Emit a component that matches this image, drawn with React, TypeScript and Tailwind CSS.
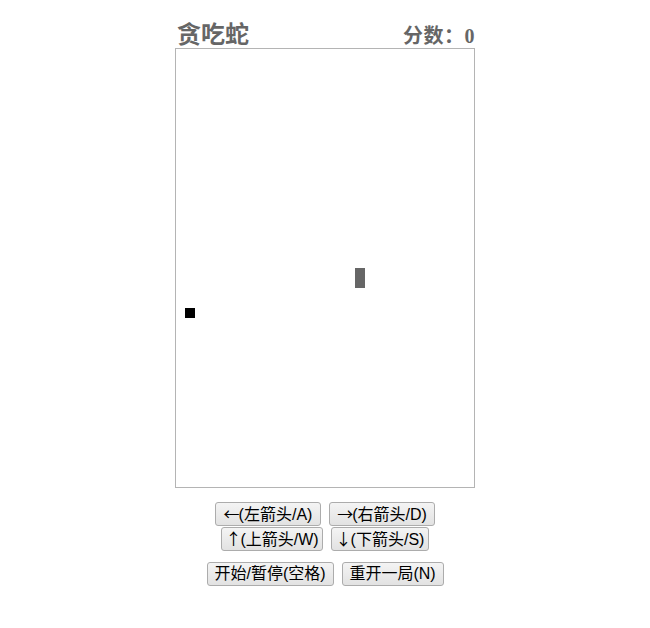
import React, { useState } from "react";

const btn =
  "h-[24px] px-[2px] text-[16px] leading-[20px] text-black whitespace-nowrap border border-[#acacac] rounded-[3px] bg-gradient-to-b from-[#f4f4f4] to-[#e2e2e2] font-['Liberation_Sans','Noto_Sans_CJK_SC',sans-serif]";

const Arrow: React.FC<{ c: string }> = ({ c }) => (
  <span className="inline-block w-[15px] text-left font-['Noto_Sans_CJK_SC',sans-serif]">{c}</span>
);

const App: React.FC = () => {
  const [score] = useState(0);
  // snake body and food, in 10px cells
  const snake = [{ x: 18, y: 22 }, { x: 18, y: 23 }];
  const food = { x: 1, y: 26 };

  return (
    <div className="min-h-screen bg-white flex flex-col items-center pt-[18px]">
      <div className="w-[300px] flex justify-between items-end h-[30px] text-[#666] font-bold font-['Liberation_Serif','Noto_Sans_CJK_SC',serif]">
        <span className="text-[24px] leading-[26px] pl-[2px]">贪吃蛇</span>
        <span className="text-[20px] leading-[24px] tracking-[0.5px]">分数：{score}</span>
      </div>

      <div className="relative w-[300px] h-[440px] border border-[#b4b4b4] bg-white">
        {snake.map((s, i) => (
          <div
            key={i}
            className="absolute w-[10px] h-[10px] bg-[#666]"
            style={{ left: s.x * 10 - 1, top: s.y * 10 - 1 }}
          />
        ))}
        <div
          className="absolute w-[10px] h-[10px] bg-black"
          style={{ left: food.x * 10 - 1, top: food.y * 10 - 1 }}
        />
      </div>

      <div className="flex flex-col items-center mt-[14px]">
        <div className="flex gap-[8px]">
          <button className={`${btn} w-[106px]`}><Arrow c="←" />(左箭头/A)</button>
          <button className={`${btn} w-[106px]`}><Arrow c="→" />(右箭头/D)</button>
        </div>
        <div className="flex gap-[8px] mt-[1px]">
          <button className={`${btn} w-[102px]`}><Arrow c="↑" />(上箭头/W)</button>
          <button className={`${btn} w-[98px]`}><Arrow c="↓" />(下箭头/S)</button>
        </div>
        <div className="flex gap-[8px] mt-[11px]">
          <button className={`${btn} w-[127px]`}>开始/暂停(空格)</button>
          <button className={`${btn} w-[102px]`}>重开一局(N)</button>
        </div>
      </div>
    </div>
  );
};

export default App;
